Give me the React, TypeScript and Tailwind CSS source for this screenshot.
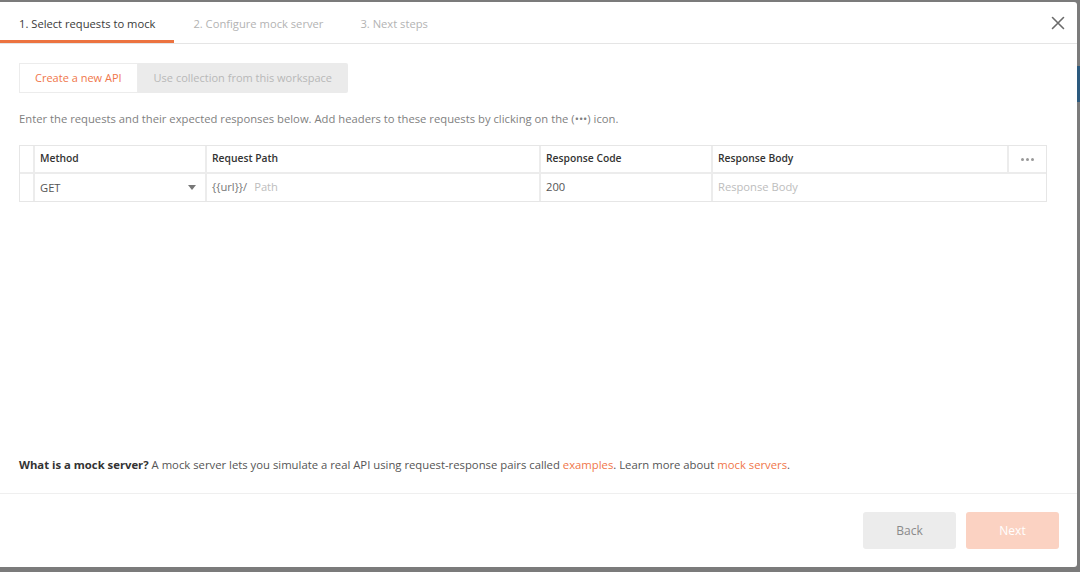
import React from "react";

const font = { fontFamily: '"Open Sans", "Noto Sans", sans-serif' };

function CloseIcon() {
  return (
    <svg width="14" height="14" viewBox="0 0 14 14" className="text-[#6b6b6b]">
      <path d="M1.5 1.5 L12.5 12.5 M12.5 1.5 L1.5 12.5" stroke="currentColor" strokeWidth="1.6" strokeLinecap="round" />
    </svg>
  );
}

export default function App() {
  const tabs = ["1. Select requests to mock", "2. Configure mock server", "3. Next steps"];

  return (
    <div className="w-[1080px] h-[572px] bg-[#7b7b7b] pt-[2px] pr-[3px] pb-[5px] flex relative overflow-hidden" style={font}>
      {/* right edge strip of the app behind */}
      <div className="absolute right-0 top-[66px] w-[3px] h-[36px] bg-[#2c5a7e]" />

      <div className="flex-1 bg-white rounded-r-[3px] flex flex-col">
        {/* step tabs */}
        <div className="h-[42px] flex items-stretch border-b border-[#e5e5e5] shrink-0">
          {tabs.map((t, i) => (
            <div
              key={t}
              className={`px-[19px] flex items-center text-[11.2px] pt-[3px] ${i === 0 ? "text-[#3a3a3a] border-b-[3px] border-[#ec7340] pt-[6px]" : "text-[#b3b3b3] pr-[18px]"}`}
            >
              {t}
            </div>
          ))}
          <div className="flex-1" />
          <div className="flex items-center pr-[12px]">
            <CloseIcon />
          </div>
        </div>

        {/* body */}
        <div className="flex-1 flex flex-col px-[19px] pt-[19px] pb-[20px]">
          <div className="flex self-start h-[30px] text-[11px]">
            <div className="px-[15px] flex items-center border border-[#ececec] text-[#f0764a] bg-white">
              Create a new API
            </div>
            <div className="px-[16px] flex items-center bg-[#ebebeb] text-[#b8b8b8] rounded-r-[2px]">
              Use collection from this workspace
            </div>
          </div>

          <p className="mt-[18px] text-[11.25px] text-[#7f7f7f] leading-[16px]">
            Enter the requests and their expected responses below. Add headers to these requests by clicking on the (•••) icon.
          </p>

          <div className="mt-[18px] w-[1028px] border border-[#e6e6e6] text-[11.2px]">
            <div className="flex h-[28px] border-b-2 border-[#ececec] text-[#333] font-semibold text-[10.3px]">
              <div className="w-[15px] border-r-2 border-[#ececec]" />
              <div className="w-[172px] border-r-2 border-[#ececec] flex items-center px-[5px]">Method</div>
              <div className="w-[334px] border-r-2 border-[#ececec] flex items-center px-[5px]">Request Path</div>
              <div className="w-[172px] border-r-2 border-[#ececec] flex items-center px-[5px]">Response Code</div>
              <div className="w-[296px] border-r-2 border-[#ececec] flex items-center px-[5px]">Response Body</div>
              <div className="flex-1 flex items-center justify-center">
                <div className="flex gap-[2px]">
                  <span className="w-[3px] h-[3px] rounded-full bg-[#999]" />
                  <span className="w-[3px] h-[3px] rounded-full bg-[#999]" />
                  <span className="w-[3px] h-[3px] rounded-full bg-[#999]" />
                </div>
              </div>
            </div>
            <div className="flex h-[27px] text-[#555]">
              <div className="w-[15px] border-r-2 border-[#ececec]" />
              <div className="w-[172px] border-r-2 border-[#ececec] flex items-center pl-[5px] pr-[9px] justify-between">
                <span className="pt-[2px]">GET</span>
                <svg width="8" height="5" viewBox="0 0 8 5"><path d="M0 0 H8 L4 5 Z" fill="#777" /></svg>
              </div>
              <div className="w-[334px] border-r-2 border-[#ececec] flex items-center px-[5px] gap-[7px]">
                <span className="text-[#777]">{"{{url}}/"}</span>
                <span className="text-[#bdbdbd]">Path</span>
              </div>
              <div className="w-[172px] border-r-2 border-[#ececec] flex items-center px-[5px]">200</div>
              <div className="flex-1 flex items-center px-[5px] text-[#bdbdbd]">Response Body</div>
            </div>
          </div>

          <div className="flex-1" />

          <p className="text-[11.3px] text-[#555] leading-[16px]">
            <span className="font-bold text-[#333]">What is a mock server?</span> A mock server lets you simulate a real API using request-response pairs called{" "}
            <span className="text-[#f0764a]">examples</span>. Learn more about <span className="text-[#f0764a]">mock servers</span>.
          </p>
        </div>

        {/* footer */}
        <div className="h-[74px] border-t border-[#efefef] flex items-center justify-end gap-[10px] pr-[18px] shrink-0">
          <div className="w-[93px] h-[37px] rounded-[3px] bg-[#ececec] text-[#8a8a8a] text-[12px] flex items-center justify-center">
            Back
          </div>
          <div className="w-[93px] h-[37px] rounded-[3px] bg-[#fbd2c2] text-white text-[12px] flex items-center justify-center">
            Next
          </div>
        </div>
      </div>
    </div>
  );
}
